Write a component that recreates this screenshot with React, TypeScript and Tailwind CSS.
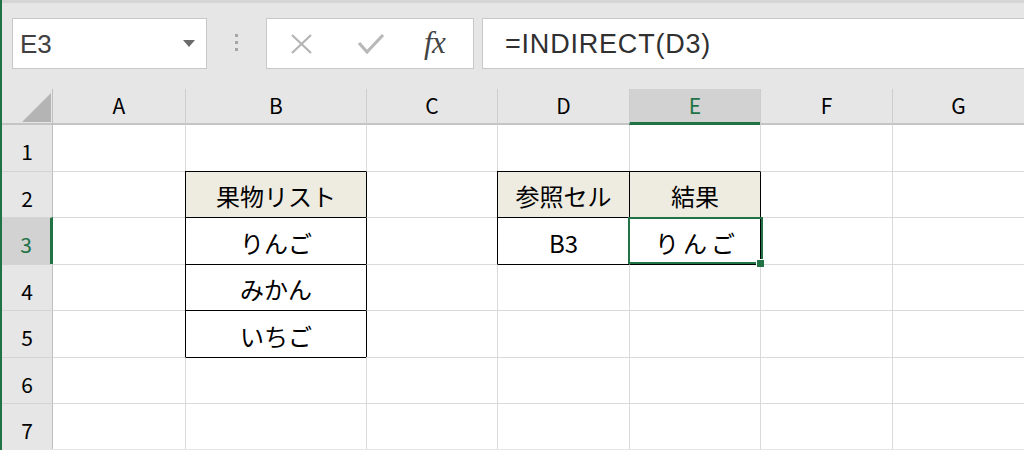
import React from 'react';

type Cell = { text: string; tan?: boolean };

const letters = ['A', 'B', 'C', 'D', 'E', 'F', 'G'];
const colW = ['w-[132px]', 'w-[181px]', 'w-[131px]', 'w-[132px]', 'w-[131px]', 'w-[132px]', 'w-[132px]'];
const rowH = ['h-[46px]', 'h-[46px]', 'h-[47px]', 'h-[46px]', 'h-[47px]', 'h-[46px]', 'h-[46px]'];

const data: Record<string, Cell> = {
  B2: { text: '果物リスト', tan: true },
  B3: { text: 'りんご' },
  B4: { text: 'みかん' },
  B5: { text: 'いちご' },
  D2: { text: '参照セル', tan: true },
  E2: { text: '結果', tan: true },
  D3: { text: 'B3' },
  E3: { text: 'りんご' },
};

const inT = (c: number, r: number) => c >= 0 && c < 7 && r >= 1 && !!data[`${letters[c]}${r}`];

const JP = "font-['Noto_Sans_CJK_JP','Noto_Sans',sans-serif]";

function GridCell({ c, r }: { c: number; r: number }) {
  const key = `${letters[c]}${r}`;
  const cell = data[key];
  const left = c === 0 ? '' : inT(c, r) || inT(c - 1, r) ? 'border-l border-l-black' : 'border-l border-l-[#dadada]';
  const top = r === 1 ? '' : inT(c, r) || inT(c, r - 1) ? 'border-t border-t-black' : 'border-t border-t-[#dadada]';
  const selected = key === 'E3';
  return (
    <div
      className={`${colW[c]} h-full shrink-0 ${left} ${top} ${cell?.tan ? 'bg-[#eeece1]' : 'bg-white'} ${
        selected ? 'relative' : ''
      } flex items-center justify-center pt-[3px] text-[24px] text-black ${JP}`}
    >
      {cell && <span className={selected ? 'tracking-[4px] pl-[4px]' : ''}>{cell.text}</span>}
      {selected && (
        <div className="absolute left-[-2px] top-[-1px] right-[-3px] bottom-0 border-2 border-[#217346] z-10">
          <div className="absolute right-[-3px] bottom-[-5px] w-[8px] h-[8px] bg-[#217346] border-l border-t border-white" />
        </div>
      )}
    </div>
  );
}

export default function App() {
  return (
    <div className="w-[1024px] h-[450px] overflow-hidden flex bg-[#e6e6e6]">
      <div className="w-[2px] h-full bg-[#217346] shrink-0" />
      <div className="w-[1022px] flex flex-col">
        {/* top strip */}
        <div className="h-[3px] bg-[#d5d5d5]" />
        {/* formula bar */}
        <div className="h-[86px] flex items-start pt-[15px] pl-[10px]">
          <div className="w-[195px] h-[51px] bg-white border border-[#c8c8c8] flex items-center justify-between pl-[7px] pr-[11px]">
            <span className="text-[26px] text-[#404040] font-['Liberation_Sans',Arial,sans-serif] pt-[2px]">E3</span>
            <svg width="12" height="7" viewBox="0 0 12 7">
              <path d="M0 0 L12 0 L6 7 Z" fill="#6b6b6b" />
            </svg>
          </div>
          <div className="w-[59px] h-[51px] flex flex-col items-center justify-center gap-[4px] pb-[2px]">
            <div className="w-[3px] h-[3px] bg-[#a6a6a6]" />
            <div className="w-[3px] h-[3px] bg-[#a6a6a6]" />
            <div className="w-[3px] h-[3px] bg-[#a6a6a6]" />
          </div>
          <div className="w-[208px] h-[51px] bg-white border border-[#c8c8c8] flex items-center">
            <svg width="24" height="22" viewBox="0 0 24 22" className="ml-[23px]">
              <path d="M2 2 L21 20 M21 2 L2 20" stroke="#b4b4b4" strokeWidth="2.2" />
            </svg>
            <svg width="28" height="22" viewBox="0 0 28 22" className="ml-[43px]">
              <path d="M2 10 L10 19 L26 2" stroke="#b8b8b8" strokeWidth="3.2" fill="none" />
            </svg>
            <span className="ml-[39px] text-[31px] italic text-[#444] font-['Liberation_Serif','Times_New_Roman',serif] leading-none pb-[3px] tracking-[-0.5px]">
              fx
            </span>
          </div>
          <div className="ml-[8px] flex-1 h-[51px] bg-white border border-[#c8c8c8] border-r-0 flex items-center pl-[22px]">
            <span className="text-[27px] text-[#303030] font-['Liberation_Sans',Arial,sans-serif] tracking-[0.8px] pt-[1px]">
              =INDIRECT(D3)
            </span>
          </div>
        </div>
        {/* column headers */}
        <div className={`h-[36px] flex ${JP}`}>
          <div className="w-[51px] h-full shrink-0 border-r border-r-[#bfbfbf] border-b-2 border-b-[#c4c4c4] relative">
            <svg width="29" height="29" viewBox="0 0 29 29" className="absolute left-[20px] top-[4px]">
              <path d="M29 0 L29 29 L0 29 Z" fill="#b4b4b4" />
            </svg>
          </div>
          {letters.map((l, i) => {
            const sel = l === 'E';
            return (
              <div
                key={l}
                className={`${colW[i]} h-full shrink-0 flex items-center justify-center text-[21px] ${
                  i === 0 ? '' : 'border-l border-l-[#cdcdcd]'
                } ${
                  sel
                    ? 'bg-[#d2d2d2] text-[#217346] border-b-[3px] border-b-[#217346]'
                    : 'text-black border-b-2 border-b-[#c4c4c4]'
                }`}
              >
                {l}
              </div>
            );
          })}
        </div>
        {/* rows */}
        {[1, 2, 3, 4, 5, 6, 7].map((r) => {
          const sel = r === 3;
          return (
            <div key={r} className={`${rowH[r - 1]} flex shrink-0`}>
              <div
                className={`w-[51px] h-full shrink-0 flex items-center justify-center pt-[8px] text-[21px] ${JP} ${
                  r === 1 ? '' : 'border-t border-t-[#d4d4d4]'
                } ${
                  sel
                    ? 'bg-[#d2d2d2] text-[#217346] border-r-[3px] border-r-[#217346]'
                    : 'text-black border-r border-r-[#bfbfbf]'
                }`}
              >
                {r}
              </div>
              {letters.map((_, c) => (
                <GridCell key={c} c={c} r={r} />
              ))}
            </div>
          );
        })}
      </div>
    </div>
  );
}
